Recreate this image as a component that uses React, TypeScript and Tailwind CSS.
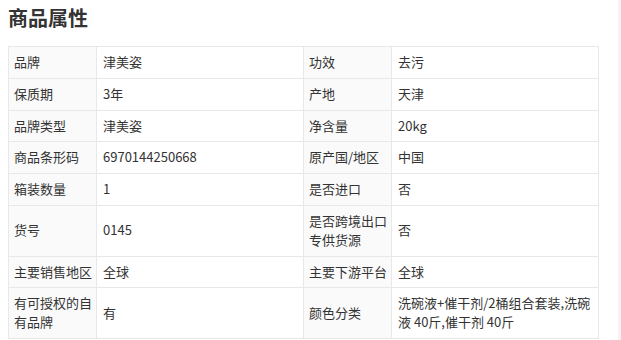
const rows: [string, string, string, string][] = [
  ["品牌", "津美姿", "功效", "去污"],
  ["保质期", "3年", "产地", "天津"],
  ["品牌类型", "津美姿", "净含量", "20kg"],
  ["商品条形码", "6970144250668", "原产国/地区", "中国"],
  ["箱装数量", "1", "是否进口", "否"],
  ["货号", "0145", "是否跨境出口专供货源", "否"],
  ["主要销售地区", "全球", "主要下游平台", "全球"],
  ["有可授权的自有品牌", "有", "颜色分类", "洗碗液+催干剂/2桶组合套装,洗碗液 40斤,催干剂 40斤"],
];

const font = { fontFamily: '"Noto Sans CJK SC", "Noto Sans", sans-serif' };

export default function App() {
  return (
    <div className="flex h-[340px] w-[621px] bg-white text-[#333]" style={font}>
      <div className="flex-1 px-2 pt-1">
        <h2 className="mb-[14px] text-[20px] font-bold leading-[28px] text-[#333]">商品属性</h2>
        <table className="w-[590px] table-fixed border-collapse text-[13px] leading-[18.8px]">
          <colgroup>
            <col className="w-[88px]" />
            <col className="w-[207px]" />
            <col className="w-[88px]" />
            <col className="w-[207px]" />
          </colgroup>
          <tbody>
            {rows.map((r, i) => (
              <tr key={i}>
                <td className="border border-[#e8e8e8] bg-[#fafafa] py-[6px] pl-[5px] pr-[3px] align-middle">{r[0]}</td>
                <td className="border border-[#e8e8e8] py-[6px] pl-[6px] pr-[4px] align-middle">{r[1]}</td>
                <td className="border border-[#e8e8e8] bg-[#fafafa] py-[6px] pl-[5px] pr-[3px] align-middle">{r[2]}</td>
                <td className="border border-[#e8e8e8] py-[6px] pl-[6px] pr-[4px] align-middle">{r[3]}</td>
              </tr>
            ))}
          </tbody>
        </table>
      </div>
      <div className="w-[3px] bg-[#f3f3f3]" />
    </div>
  );
}
